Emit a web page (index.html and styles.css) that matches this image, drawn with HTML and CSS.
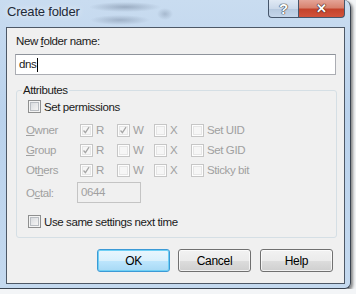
FILE: index.html
```html
<!DOCTYPE html>
<html lang="en">
<head>
    <meta charset="UTF-8">
    <title>Create folder</title>
    <link rel="stylesheet" href="styles.css">
</head>
<body>
    <div class="window">
        <div class="titlebar">
            <div class="title">Create folder</div>
            <div class="caption-buttons">
                <span class="cap-btn help">?</span>
                <span class="cap-btn close">&#x2715;</span>
            </div>
        </div>

        <div class="client">
            <div class="label">New <u>f</u>older name:</div>
            <div class="textbox">dns<span class="caret"></span></div>

            <fieldset class="group">
                <legend>Attributes</legend>

                <div class="check-row">
                    <span class="cb"></span>
                    <span>Set permissions</span>
                </div>

                <div class="perms">
                    <span class="perm-label"><u>O</u>wner</span>
                    <span class="cell"><span class="cb disabled checked"><svg viewBox="0 0 13 13"><path d="M3 6.5 L5.2 9 L9.5 2.5"/></svg></span>R</span>
                    <span class="cell"><span class="cb disabled checked"><svg viewBox="0 0 13 13"><path d="M3 6.5 L5.2 9 L9.5 2.5"/></svg></span>W</span>
                    <span class="cell"><span class="cb disabled"></span>X</span>
                    <span class="cell"><span class="cb disabled"></span>Set UID</span>

                    <span class="perm-label"><u>G</u>roup</span>
                    <span class="cell"><span class="cb disabled checked"><svg viewBox="0 0 13 13"><path d="M3 6.5 L5.2 9 L9.5 2.5"/></svg></span>R</span>
                    <span class="cell"><span class="cb disabled"></span>W</span>
                    <span class="cell"><span class="cb disabled"></span>X</span>
                    <span class="cell"><span class="cb disabled"></span>Set GID</span>

                    <span class="perm-label">Ot<u>h</u>ers</span>
                    <span class="cell"><span class="cb disabled checked"><svg viewBox="0 0 13 13"><path d="M3 6.5 L5.2 9 L9.5 2.5"/></svg></span>R</span>
                    <span class="cell"><span class="cb disabled"></span>W</span>
                    <span class="cell"><span class="cb disabled"></span>X</span>
                    <span class="cell"><span class="cb disabled"></span>Sticky bit</span>
                </div>

                <div class="octal-row">
                    <span class="perm-label octal-label">O<u>c</u>tal:</span>
                    <span class="octal-box">0644</span>
                </div>

                <div class="check-row last">
                    <span class="cb"></span>
                    <span>Use same settings next time</span>
                </div>
            </fieldset>

            <div class="buttons">
                <button class="btn default">OK</button>
                <button class="btn">Cancel</button>
                <button class="btn">Help</button>
            </div>
        </div>
    </div>
</body>
</html>
```

FILE: styles.css
```css
body {
    margin: 0;
    background: #f3f5f7;
    font-family: "Liberation Sans", Arial, sans-serif;
    font-size: 11.5px;
    letter-spacing: -0.4px;
    color: #1a1a1a;
}
u {
    text-decoration-thickness: 1px;
    text-underline-offset: 1px;
}
.window {
    width: 351px;
    height: 289px;
    box-sizing: border-box;
    padding: 0 5px 4px 6px;
    border-right: 1px solid #3a4350;
    border-bottom: 1px solid #3a4350;
    border-radius: 0 7px 6px 0;
    box-shadow: 2px 2px 3px rgba(0,0,0,0.45);
    background:
        radial-gradient(ellipse 36px 5px at 125px 7px, rgba(70,85,110,0.35), transparent),
        radial-gradient(ellipse 30px 5px at 120px 20px, rgba(70,85,110,0.3), transparent),
        radial-gradient(ellipse 8px 6px at 165px 14px, rgba(70,85,110,0.25), transparent),
        linear-gradient(180deg, #c9dcf0 0%, #bad2ec 40%, #c4d9ef 100%);
}
.titlebar {
    height: 27px;
    display: flex;
    justify-content: space-between;
    align-items: flex-start;
}
.title {
    padding: 4px 0 0 1px;
    font-size: 13px;
    letter-spacing: -0.2px;
    color: #1e2a38;
    text-shadow: 0 0 6px rgba(255,255,255,0.9);
}
.caption-buttons {
    display: flex;
}
.cap-btn {
    height: 18px;
    box-sizing: border-box;
    border: 1px solid #46566b;
    border-top: none;
    display: flex;
    align-items: center;
    justify-content: center;
    color: #fff;
    font-weight: bold;
    letter-spacing: 0;
}
.help {
    width: 30px;
    border-right: none;
    border-radius: 0 0 0 4px;
    background: linear-gradient(180deg, #e0e9f4 0%, #cbd9ea 50%, #b5c8de 51%, #c5d6ea 100%);
    font-size: 15px;
    text-shadow: 0 0 1px #333, 0 0 1px #333, 0 0 1px #333;
}
.close {
    width: 47px;
    border-radius: 0 0 4px 0;
    background: linear-gradient(180deg, #e4a497 0%, #d8826f 45%, #c4432c 55%, #d2533c 100%);
    font-size: 13px;
    text-shadow: 0 0 1px #3a1a14, 0 0 1px #3a1a14, 0 0 1px #3a1a14;
}
.client {
    background: #f0f0f0;
    border: 1px solid #4d5866;
    padding: 6px 8px 11px 8px;
}
.label {
    line-height: 15px;
    padding-left: 1px;
}
.textbox {
    margin-top: 5px;
    height: 21px;
    box-sizing: border-box;
    border: 1px solid #abadb3;
    border-top-color: #8e939b;
    background: #fff;
    padding: 2px 3px;
    line-height: 15px;
    display: flex;
    align-items: center;
}
.caret {
    width: 1px;
    height: 14px;
    background: #000;
    margin-left: 1px;
}
.group {
    margin: 8px -1px 0 1px;
    padding: 1px 10px 8px 11px;
    border: 1px solid #d5dfe5;
    border-radius: 3px;
    min-width: 0;
}
.group legend {
    margin-left: -6px;
    padding: 0 1px;
    line-height: 15px;
}
.check-row {
    display: flex;
    align-items: center;
    gap: 3px;
    height: 15px;
}
.check-row.last {
    margin-top: 11px;
}
.cb {
    width: 13px;
    height: 13px;
    box-sizing: border-box;
    border: 1px solid #8e8f8f;
    background: linear-gradient(135deg, #d0d4d9 0%, #f0f0f0 70%, #fafafa 100%);
    box-shadow: inset 0 0 0 1px #f4f4f4, inset 0 0 0 2px #b9bdc2;
    flex: none;
}
.cb.disabled {
    border-color: #c6c6c6;
    background: #f6f6f6;
    box-shadow: inset 0 0 0 1px #fdfdfd, inset 0 0 0 2px #e6e6e6;
}
.cb svg {
    display: block;
    width: 11px;
    height: 11px;
}
.cb svg path {
    fill: none;
    stroke: #a6a6a6;
    stroke-width: 1.5;
}
.perms {
    margin: 6px 0 0 -2px;
    display: grid;
    grid-template-columns: 54px 37px 37px 37px auto;
    grid-auto-rows: 20px;
    color: #a0a0a0;
}
.perm-label {
    display: flex;
    align-items: center;
    color: #a0a0a0;
}
.cell {
    display: flex;
    align-items: center;
    gap: 3px;
}
.octal-row {
    margin: 2px 0 0 -2px;
    display: flex;
    height: 21px;
}
.octal-label {
    width: 51px;
}
.octal-box {
    width: 64px;
    box-sizing: border-box;
    border: 1px solid #c4c4c4;
    background: #f0f0f0;
    color: #a0a0a0;
    padding: 2px 3px;
    line-height: 15px;
}
.buttons {
    margin: 11px 3px 0 0;
    display: flex;
    justify-content: flex-end;
    gap: 8px;
}
.btn {
    width: 73px;
    height: 23px;
    border: 1px solid #707070;
    border-radius: 3px;
    background: linear-gradient(180deg, #f2f2f2 0%, #ebebeb 50%, #dddddd 51%, #cfcfcf 100%);
    box-shadow: inset 0 0 0 1px rgba(255,255,255,0.7);
    font-family: inherit;
    font-size: 12px;
    letter-spacing: -0.3px;
    color: #000;
    padding: 0;
}
.btn:last-child {
    margin-left: 1px;
}
.btn.default {
    border-color: #3c9ad6;
    background: linear-gradient(180deg, #eaf6fd 0%, #d9f0fc 50%, #bee6fd 51%, #a7d9f5 100%);
    box-shadow: inset 0 0 0 1px #6fd0f5;
}
```
